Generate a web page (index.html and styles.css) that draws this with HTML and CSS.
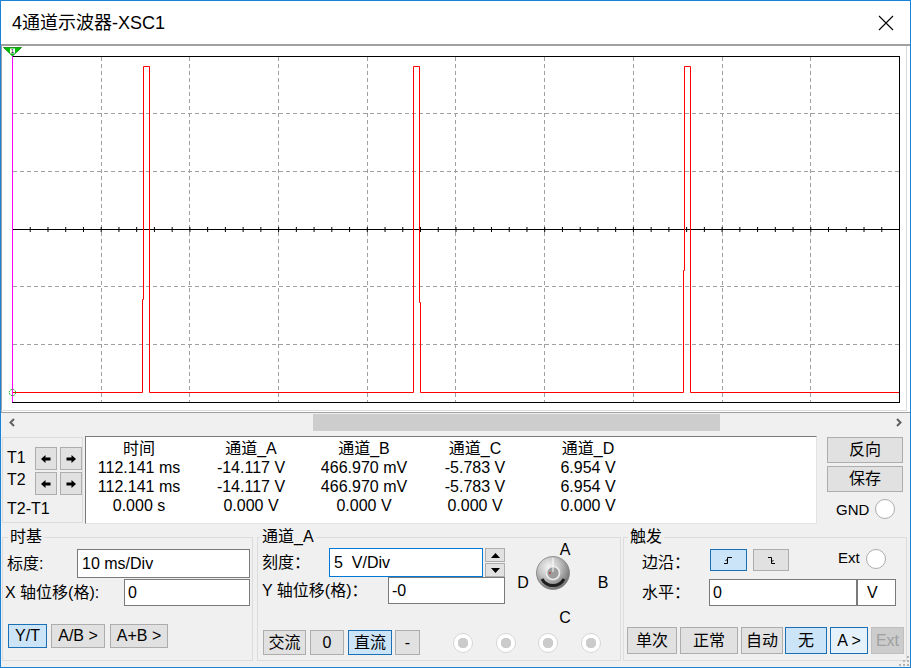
FILE: index.html
```html
<!DOCTYPE html>
<html lang="zh-CN">
<head>
<meta charset="utf-8">
<title>4通道示波器-XSC1</title>
<link rel="stylesheet" href="styles.css">
</head>
<body>
<div class="window">
  <header class="titlebar">
    <span class="title">4通道示波器-XSC1</span>
    <svg class="close" width="16" height="16" viewBox="0 0 16 16"><path d="M1 1L15 15M15 1L1 15" stroke="#000" stroke-width="1.1" fill="none"/></svg>
  </header>

  <div class="scope">
    <svg width="909" height="366" viewBox="1 46 909 366">
      <rect x="1" y="46" width="909" height="366" fill="#fff"/>
      <line x1="1.5" y1="46" x2="1.5" y2="412" stroke="#a0a0a0"/>
      <line x1="906.5" y1="46" x2="906.5" y2="411" stroke="#dcdcdc"/>
      <line x1="1" y1="410.5" x2="907" y2="410.5" stroke="#dcdcdc"/>
      <g stroke="#a0a0a0" stroke-width="1" stroke-dasharray="4 3">
        <line x1="101.5" y1="57" x2="101.5" y2="402"/>
        <line x1="189.5" y1="57" x2="189.5" y2="402"/>
        <line x1="278.5" y1="57" x2="278.5" y2="402"/>
        <line x1="367.5" y1="57" x2="367.5" y2="402"/>
        <line x1="455.5" y1="57" x2="455.5" y2="402"/>
        <line x1="544.5" y1="57" x2="544.5" y2="402"/>
        <line x1="633.5" y1="57" x2="633.5" y2="402"/>
        <line x1="722.5" y1="57" x2="722.5" y2="402"/>
        <line x1="810.5" y1="57" x2="810.5" y2="402"/>
        <line x1="13" y1="113.5" x2="899" y2="113.5"/>
        <line x1="13" y1="171.5" x2="899" y2="171.5"/>
        <line x1="13" y1="286.5" x2="899" y2="286.5"/>
        <line x1="13" y1="344.5" x2="899" y2="344.5"/>
      </g>
      <line x1="12" y1="229.5" x2="899" y2="229.5" stroke="#000"/>
      <line x1="12" y1="229.5" x2="899" y2="229.5" stroke="#000" stroke-width="5" stroke-dasharray="1 16.74"/>
      <rect x="12.5" y="56.5" width="887" height="346" fill="none" stroke="#000"/>
      <polyline fill="none" stroke="#ff0000" stroke-width="1"
        points="12,392.5 142.5,392.5 142.5,299.5 143.5,299.5 143.5,66.5 149.5,66.5 149.5,392.5 413.5,392.5 413.5,66.5 419.5,66.5 419.5,302.5 420.5,302.5 420.5,392.5 683.5,392.5 683.5,270.5 684.5,270.5 684.5,66.5 690.5,66.5 690.5,392.5 899,392.5"/>
      <line x1="12.5" y1="56" x2="12.5" y2="402" stroke="#ff00ff"/>
      <circle cx="12.5" cy="392.5" r="3.2" fill="none" stroke="#00b000" stroke-width="1" stroke-dasharray="1.5 1"/>
      <polygon points="3.5,47.5 21.5,47.5 12.5,56" fill="#00c000" stroke="#008000" stroke-width="0.8"/>
      <rect x="10" y="48.5" width="5" height="5" fill="#fff"/>
      <text x="12.5" y="53.3" font-size="6" font-family="Liberation Sans" text-anchor="middle" fill="#000">1</text>
    </svg>
  </div>

  <div class="hscroll">
    <svg class="sarrow" width="17" height="20" viewBox="0 0 17 20"><path d="M13 6L9.5 9.5L13 13" stroke="#606060" stroke-width="2" fill="none"/></svg>
    <div class="track"><div class="thumb"></div></div>
    <svg class="sarrow" width="17" height="20" viewBox="0 0 17 20"><path d="M4 6L7.5 9.5L4 13" stroke="#606060" stroke-width="2" fill="none"/></svg>
  </div>

  <div class="panel">
    <div class="meas">
      <div class="tbox">
        <span class="tlbl t1">T1</span>
        <div class="abtn"><svg width="10" height="8" viewBox="0 0 10 8"><path d="M0 4L4.5 0V2.5H9.5V5.5H4.5V8Z" fill="#000"/></svg></div>
        <div class="abtn"><svg width="10" height="8" viewBox="0 0 10 8"><path d="M10 4L5.5 0V2.5H0.5V5.5H5.5V8Z" fill="#000"/></svg></div>
        <span class="tlbl">T2</span>
        <div class="abtn"><svg width="10" height="8" viewBox="0 0 10 8"><path d="M0 4L4.5 0V2.5H9.5V5.5H4.5V8Z" fill="#000"/></svg></div>
        <div class="abtn"><svg width="10" height="8" viewBox="0 0 10 8"><path d="M10 4L5.5 0V2.5H0.5V5.5H5.5V8Z" fill="#000"/></svg></div>
        <span class="tlbl tdiff">T2-T1</span>
      </div>
      <div class="readings">
        <div class="rgrid">
          <span>时间</span><span>通道_A</span><span>通道_B</span><span>通道_C</span><span>通道_D</span>
          <span>112.141 ms</span><span>-14.117 V</span><span>466.970 mV</span><span>-5.783 V</span><span>6.954 V</span>
          <span>112.141 ms</span><span>-14.117 V</span><span>466.970 mV</span><span>-5.783 V</span><span>6.954 V</span>
          <span>0.000 s</span><span>0.000 V</span><span>0.000 V</span><span>0.000 V</span><span>0.000 V</span>
        </div>
      </div>
      <div class="side">
        <div class="btn sbtn">反向</div>
        <div class="btn sbtn">保存</div>
        <div class="gnd"><span>GND</span><span class="circ"></span></div>
      </div>
    </div>

    <div class="groups">
      <fieldset class="grp g-time">
        <legend>时基</legend>
        <div class="row tr1"><span class="lbl">标度:</span><div class="field f-scale">10 ms/Div</div></div>
        <div class="row tr2"><span class="lbl">X 轴位移(格):</span><div class="field f-xpos">0</div></div>
        <div class="btnrow tb">
          <div class="btn on w39">Y/T</div>
          <div class="btn w54">A/B &gt;</div>
          <div class="btn w58">A+B &gt;</div>
        </div>
      </fieldset>

      <fieldset class="grp g-ch">
        <legend>通道_A</legend>
        <div class="chgrid">
          <div class="row cr1">
            <span class="lbl l67">刻度：</span>
            <div class="field focus f-vdiv">5  V/Div</div>
            <div class="spin">
              <div class="sp"><svg width="9" height="5" viewBox="0 0 9 5"><path d="M0 5L4.5 0L9 5Z" fill="#000"/></svg></div>
              <div class="sp"><svg width="9" height="5" viewBox="0 0 9 5"><path d="M0 0L4.5 5L9 0Z" fill="#000"/></svg></div>
            </div>
          </div>
          <div class="row cr2">
            <span class="lbl l126">Y 轴位移(格)：</span>
            <div class="field f-ypos">-0</div>
          </div>
          <svg class="knob" width="110" height="88" viewBox="0 0 110 88">
            <defs>
              <radialGradient id="kg" cx="38%" cy="32%" r="72%">
                <stop offset="0" stop-color="#f6f6f6"/>
                <stop offset="0.45" stop-color="#c4c4c4"/>
                <stop offset="1" stop-color="#6c6c6c"/>
              </radialGradient>
            </defs>
            <circle cx="43" cy="31" r="16.5" fill="url(#kg)" stroke="#808080" stroke-width="0.8"/>
            <path d="M32 37A12.5 12.5 0 0 0 54 37" stroke="#1e1e1e" stroke-width="3" fill="none"/>
            <circle cx="43" cy="31" r="6.5" fill="#9c9c9c" stroke="#ececec" stroke-width="1.6"/>
            <line x1="43" y1="30" x2="43" y2="16" stroke="#fff" stroke-width="1"/>
            <circle cx="40" cy="31" r="0.9" fill="#c03030"/>
            <g font-family="Liberation Sans, sans-serif" font-size="16" text-anchor="middle" fill="#000">
              <text x="55" y="12.7">A</text>
              <text x="13" y="45.7">D</text>
              <text x="93" y="45.7">B</text>
              <text x="55" y="80.7">C</text>
            </g>
          </svg>
          <div class="btnrow cb">
            <div class="btn w43">交流</div>
            <div class="btn w34 ml4">0</div>
            <div class="btn on w44 ml4">直流</div>
            <div class="btn w25 ml3">-</div>
            <span class="radio ml33"></span>
            <span class="radio ml23"></span>
            <span class="radio ml22"></span>
            <span class="radio ml23"></span>
          </div>
        </div>
      </fieldset>

      <fieldset class="grp g-trig">
        <legend>触发</legend>
        <div class="row gr1">
          <span class="lbl l68 lo">边沿：</span>
          <div class="btn on ebtn w37"><svg width="9" height="7" viewBox="0 0 9 7"><path d="M0 6.5H3.5V0.5H8" stroke="#000" stroke-width="1" fill="none"/><path d="M1.5 4L3.5 2" stroke="#000" stroke-width="1"/></svg></div>
          <div class="btn ebtn w36 ml6"><svg width="9" height="7" viewBox="0 0 9 7"><path d="M1 0.5H4.5V6.5H8" stroke="#000" stroke-width="1" fill="none"/><path d="M4.5 5L6.5 3" stroke="#000" stroke-width="1"/></svg></div>
          <span class="ext">Ext</span><span class="circ"></span>
        </div>
        <div class="row gr2">
          <span class="lbl l67">水平：</span>
          <div class="field f-level">0</div>
          <div class="field f-unit">V</div>
        </div>
        <div class="btnrow gb">
          <div class="btn w50">单次</div>
          <div class="btn w58 ml3">正常</div>
          <div class="btn w42 ml3">自动</div>
          <div class="btn on w42 ml2">无</div>
          <div class="btn on2 w38 ml3">A &gt;</div>
          <div class="btn dis w33 ml3">Ext</div>
        </div>
      </fieldset>
    </div>
  </div>

  <svg class="grip" width="12" height="12" viewBox="0 0 12 12">
    <g fill="#b4b4b4">
      <rect x="9" y="1" width="2" height="2"/>
      <rect x="5" y="5" width="2" height="2"/><rect x="9" y="5" width="2" height="2"/>
      <rect x="1" y="9" width="2" height="2"/><rect x="5" y="9" width="2" height="2"/><rect x="9" y="9" width="2" height="2"/>
    </g>
  </svg>
</div>
</body>
</html>
```
FILE: styles.css
```css
* { box-sizing: border-box; }
html, body { margin: 0; padding: 0; }
body {
  width: 911px;
  height: 668px;
  overflow: hidden;
  background: #fff;
  font-family: "Liberation Sans", "Noto Sans CJK SC", sans-serif;
  font-size: 16px;
  color: #000;
}
.window {
  position: relative;
  width: 911px;
  height: 668px;
  border: 1px solid #1883d7;
  background: #f0f0f0;
  display: flex;
  flex-direction: column;
}
.titlebar {
  flex: none;
  height: 43px;
  background: #fff;
  display: flex;
  align-items: center;
  justify-content: space-between;
  padding: 0 16px 0 11px;
}
.title { font-size: 18px; line-height: 24px; }
.close { display: block; }

.scope {
  flex: none;
  height: 368px;
  border-top: 2px solid #a0a0a0;
  background: #fff;
}
.scope svg { display: block; }

.hscroll {
  flex: none;
  height: 21px;
  border-top: 1px solid #a0a0a0;
  display: flex;
  background: #f0f0f0;
}
.sarrow { display: block; flex: none; }
.track { flex: 1; padding-top: 1px; }
.thumb { width: 407px; height: 17px; margin-left: 295px; background: #cdcdcd; }

.panel {
  flex: none;
  height: 234px;
  padding: 3px 0 0 1px;
  display: flex;
  flex-direction: column;
}
.meas { display: flex; height: 88px; flex: none; }
.tbox {
  width: 81px;
  height: 86px;
  margin-top: 1px;
  border: 1px solid #dcdcdc;
  padding: 9px 0 0 4px;
  display: grid;
  grid-template-columns: 25px 22px 22px;
  grid-template-rows: 23px 23px auto;
  column-gap: 3px;
  row-gap: 2px;
}
.tlbl { align-self: start; line-height: 16px; }
.t1 { margin-top: 3px; }
.tdiff { grid-column: 1 / 4; margin-top: 4px; }
.abtn {
  background: #e1e1e1;
  border: 1px solid #adadad;
  display: flex;
  align-items: center;
  justify-content: center;
}
.abtn svg { display: block; }

.readings {
  width: 732px;
  margin-left: 2px;
  background: #fff;
  border-top: 1px solid #7a7a7a;
  border-left: 1px solid #7a7a7a;
  border-right: 1px solid #e3e3e3;
  border-bottom: 1px solid #e3e3e3;
}
.rgrid {
  display: grid;
  grid-template-columns: 106px 118px 108px 114px 112px;
  grid-auto-rows: 19px;
  line-height: 19px;
  text-align: center;
  white-space: nowrap;
  padding-top: 2px;
}

.side {
  width: 76px;
  margin-left: 10px;
  padding-top: 1px;
  display: flex;
  flex-direction: column;
}
.btn {
  display: flex;
  align-items: center;
  justify-content: center;
  background: #e1e1e1;
  border: 1px solid #adadad;
  line-height: 18px;
  white-space: nowrap;
  flex: none;
}
.btn.on { background: #cce4f7; border-color: #1a6fb5; }
.btn.on2 { background: #e5f1fb; border-color: #1a6fb5; }
.btn.dis { background: #cccccc; border-color: #bfbfbf; color: #a0a0a0; }
.sbtn { height: 26px; }
.sbtn + .sbtn { margin-top: 3px; }
.gnd {
  display: flex;
  align-items: center;
  margin-top: 7px;
  padding-left: 9px;
  height: 20px;
  font-size: 15px;
}
.circ {
  display: block;
  width: 20px;
  height: 20px;
  border-radius: 50%;
  background: #fff;
  border: 1px solid #adadad;
  margin-left: 6px;
  flex: none;
}

.groups { display: flex; margin-top: 5px; flex: none; }
.grp {
  margin: 0;
  padding: 0;
  border: 1px solid #dcdcdc;
  min-width: 0;
  height: 132px;
}
.grp legend { padding: 0 2px; line-height: 16px; font-size: 16px; }
.g-time { width: 251px; }
.g-time legend { margin-left: 5px; }
.g-ch { width: 364px; margin-left: 4px; }
.g-ch legend { margin-left: 2px; }
.g-trig { width: 284px; margin-left: 2px; }
.g-trig legend { margin-left: 4px; }

.row { display: flex; align-items: center; }
.lbl { white-space: nowrap; line-height: 16px; flex: none; }
.field {
  background: #fff;
  border: 1px solid #7a7a7a;
  height: 100%;
  display: flex;
  align-items: center;
  white-space: pre;
  padding-left: 3px;
  flex: none;
}
.field.focus { border-color: #0078d7; }

.tr1 { height: 29px; margin-top: 4px; padding-left: 4px; }
.tr2 { height: 27px; margin-top: 1px; padding-left: 2px; }
.f-scale { width: 173px; margin-left: auto; margin-right: 2px; padding-left: 4px; }
.f-xpos { width: 126px; margin-left: auto; margin-right: 2px; }
.btnrow { display: flex; align-items: center; }
.tb { height: 24px; margin-top: 18px; padding-left: 5px; }
.tb .btn { height: 24px; }
.tb .w54 { margin-left: 4px; }
.tb .w58 { margin-left: 5px; }

.chgrid {
  display: grid;
  grid-template-columns: 252px 110px;
  grid-template-rows: 29px 53px 25px;
  margin-top: 3px;
}
.cr1 { grid-column: 1; grid-row: 1; padding-left: 4px; }
.cr2 { grid-column: 1; grid-row: 2; padding-left: 4px; align-items: flex-start; }
.cr2 .lbl { margin-top: 6px; }
.cr1 .field { height: 29px; }
.f-vdiv { width: 154px; padding-left: 4px; }
.f-ypos { width: 117px; height: 27px !important; }
.l67 { width: 67px; }
.l68 { width: 68px; }
.l126 { width: 126px; }
.spin { margin-left: 2px; display: flex; flex-direction: column; gap: 1px; }
.sp {
  width: 20px;
  height: 14px;
  background: #e1e1e1;
  border: 1px solid #adadad;
  display: flex;
  align-items: center;
  justify-content: center;
}
.sp svg { display: block; }
.knob { grid-column: 2; grid-row: 1 / 3; margin-top: -6px; display: block; }
.cb { grid-column: 1 / 3; grid-row: 3; padding-left: 5px; }
.cb .btn { height: 25px; }
.radio {
  display: block;
  width: 20px;
  height: 20px;
  border-radius: 50%;
  border: 1px solid #d6d6d6;
  background: radial-gradient(circle, #cbcbcb 0 5px, #ffffff 5.5px);
  flex: none;
}

.gr1 { height: 22px; margin-top: 4px; padding-left: 18px; align-items: flex-start; }
.gr1 .lo { margin-top: 6px; }
.ebtn { height: 22px; }
.ext { margin-left: 49px; font-size: 15px; line-height: 22px; margin-top: -2px; }
.gr1 .circ { margin-top: 0; }
.gr2 { height: 27px; margin-top: 8px; padding-left: 18px; }
.f-level { width: 148px; }
.f-unit { width: 39px; padding-left: 9px; }
.gb { height: 27px; margin-top: 21px; padding-left: 3px; }
.gb .btn { height: 27px; }

.w25 { width: 25px; } .w33 { width: 33px; } .w34 { width: 34px; } .w36 { width: 36px; }
.w37 { width: 37px; } .w38 { width: 38px; } .w39 { width: 39px; } .w42 { width: 42px; }
.w43 { width: 43px; } .w44 { width: 44px; } .w50 { width: 50px; } .w54 { width: 54px; }
.w58 { width: 58px; }
.ml2 { margin-left: 2px; } .ml3 { margin-left: 3px; } .ml4 { margin-left: 4px; }
.ml6 { margin-left: 6px; } .ml22 { margin-left: 22px; } .ml23 { margin-left: 23px; }
.ml33 { margin-left: 33px; }

.grip { position: absolute; right: 0; bottom: 0; display: block; }
```
